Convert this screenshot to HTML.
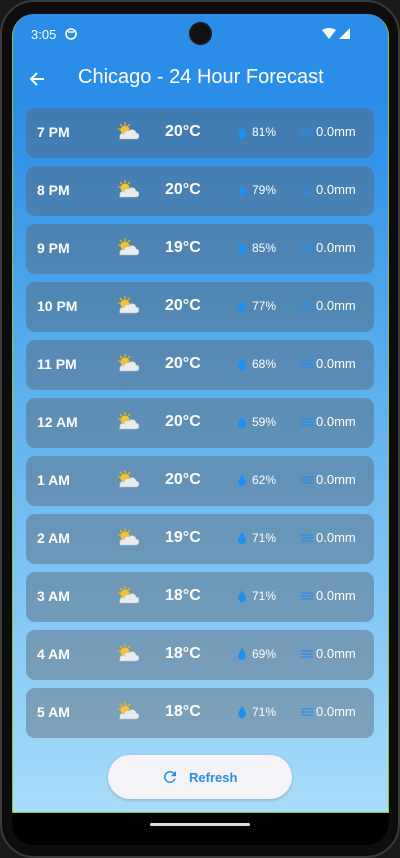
<!DOCTYPE html>
<html><head><meta charset="utf-8"><style>
*{margin:0;padding:0;box-sizing:border-box}
body{width:400px;height:858px;background:#1a1a1a;position:relative;overflow:hidden;font-family:"Liberation Sans",sans-serif}
.frame{position:absolute;left:0;top:0;width:400px;height:858px;border-radius:34px;background:#0d0d0d;border:2px solid #3a3a3a}
.screen{position:absolute;left:12px;top:14px;width:377px;height:799px;border-radius:22px 22px 0 0;background:linear-gradient(#2a8de8 0%,#2a8de8 11%,#5aaeee 45%,#a8dcf9 100%);border:1px solid #8bc34a;border-top:none;overflow:hidden}
.nav{position:absolute;left:12px;top:813px;width:377px;height:32px;background:#000;border-radius:0 0 22px 22px}
.pill{position:absolute;left:150px;top:823px;width:100px;height:3px;background:#ddd;border-radius:2px}
.cam{position:absolute;left:189px;top:22px;width:23px;height:23px;border-radius:50%;background:#111;box-shadow:inset 0 0 3px #333}
.st{position:absolute;top:27px;color:#fff;font-size:13px}
.title{position:absolute;left:78px;top:66px;color:#fff;font-size:20px}
.card{position:absolute;left:26px;width:348px;height:50px;border-radius:9px;background:rgba(88,100,112,0.45)}
.t{position:absolute;left:11px;top:16px;color:#fff;font-weight:bold;font-size:14px}
.ic{position:absolute;left:89px;top:13px}
.tp{position:absolute;left:139px;top:15px;color:#fff;font-weight:bold;font-size:16px}
.dr{position:absolute;left:211px;top:18px}
.h{position:absolute;left:226px;top:17px;color:#fff;font-size:12px}
.rn{position:absolute;left:275px;top:20px}
.r{position:absolute;left:290px;top:16px;color:#fff;font-size:13px}
.btn{position:absolute;left:108px;top:755px;width:184px;height:44px;border-radius:22px;background:#f4f4f8;box-shadow:0 1px 3px rgba(0,0,0,.2);color:#2a8de8;font-weight:bold;font-size:13px}
</style></head><body>
<div class="frame"></div>
<div class="screen"></div>
<div class="nav"></div><div class="pill"></div>
<div class="cam"></div>
<div class="st" style="left:31px">3:05</div>
<svg style="position:absolute;left:65px;top:28px" width="12" height="12"><circle cx="6" cy="6" r="5" fill="none" stroke="#fff" stroke-width="1.6"/><path d="M3 4h6" stroke="#fff" stroke-width="1.5"/></svg>
<svg style="position:absolute;left:322px;top:28px" width="30" height="12"><path d="M0 2 Q7 -2 14 2 L7 11Z" fill="#fff"/><path d="M17 11 L28 0 L28 11Z" fill="#fff"/></svg>
<svg style="position:absolute;left:28px;top:70px" width="18" height="18"><path d="M16 9H3M9 3L3 9L9 15" stroke="#fff" stroke-width="2" fill="none"/></svg>
<div class="title">Chicago - 24 Hour Forecast</div>
<div id="c"></div>
<div class="btn"><svg style="position:absolute;left:53px;top:13px" width="18" height="18" viewBox="0 0 24 24"><path d="M17.65 6.35A7.960 7.96 0 0 0 12 4a8 8 0 1 0 7.73 10h-2.08A6 6 0 1 1 12 6c1.66 0 3.14.69 4.220 1.78L13 11h7V4z" fill="#2a8de8"/></svg><span style="position:absolute;left:81px;top:15px">Refresh</span></div>
<script>
var d=[["7 PM","20","81"],["8 PM","20","79"],["9 PM","19","85"],["10 PM","20","77"],["11 PM","20","68"],["12 AM","20","59"],["1 AM","20","62"],["2 AM","19","71"],["3 AM","18","71"],["4 AM","18","69"],["5 AM","18","71"]];
var h="";d.forEach(function(x,i){h+='<div class="card" style="top:'+(108+i*58)+'px"><div class="t">'+x[0]+'</div><svg class="ic" width="24" height="20" viewBox="0 0 24 20"><g stroke="#f4b400" stroke-width="1.3"><path d="M10 1v3M3 8h3M5 3l2 2M15 3l-2 2"/></g><circle cx="10" cy="9" r="4.5" fill="#f9c22e"/><path d="M5 18h16a3 3 0 0 0 0-6 4 4 0 0 0-7-2 3.5 3.5 0 0 0-5 3 2.5 2.5 0 0 0-4 2.5 2.5 2.5 0 0 0 0 2.5z" fill="#e8ecef" stroke="#b8c2ca" stroke-width=".6"/></svg><div class="tp">'+x[1]+'°C</div><svg class="dr" width="10" height="12" viewBox="0 0 10 12"><path d="M5 0 C3 4 1 6 1 8 a4 4 0 0 0 8 0 C9 6 7 4 5 0z" fill="#1e90f0"/></svg><div class="h">'+x[2]+'%</div><svg class="rn" width="12" height="8"><path d="M0 1h12M0 4h12M0 7h12" stroke="#2a8de8" stroke-width="1.3"/></svg><div class="r">0.0mm</div></div>'});
document.getElementById("c").innerHTML=h;
</script>
</body></html>
